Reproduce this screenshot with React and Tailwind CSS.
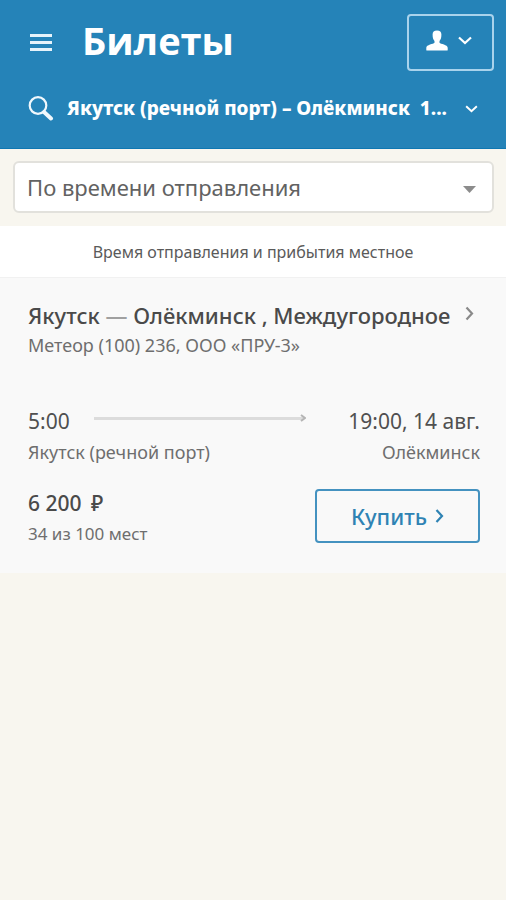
import React from "react"

const MenuIcon = () => (
  <svg width="22" height="20" viewBox="0 0 22 20" fill="#e6f3fb" aria-hidden="true">
    <rect x="0" y="1" width="22" height="3" />
    <rect x="0" y="8" width="22" height="3" />
    <rect x="0" y="15" width="22" height="3" />
  </svg>
)

const SearchIcon = () => (
  <svg width="26" height="26" viewBox="0 0 26 26" fill="none" stroke="#f0f8fd" aria-hidden="true">
    <circle cx="10" cy="10.5" r="8.3" strokeWidth="2.2" />
    <path d="M16 17 L23 23.5" strokeWidth="4" strokeLinecap="round" />
  </svg>
)

const UserIcon = () => (
  <svg width="22" height="22" viewBox="0 0 22 22" fill="#ffffff" aria-hidden="true">
    <path d="M11 0.5 C14 0.5 15.4 1.8 15.4 4.6 C15.4 8 14.8 9.6 13.5 11 V12.8 C14.5 14.2 21.7 14.6 21.7 17.8 V20 Q21.7 20.6 21 20.6 H1 Q0.3 20.6 0.3 20 V17.8 C0.3 14.6 7.5 14.2 8.5 12.8 V11 C7.2 9.6 6.6 8 6.6 4.6 C6.6 1.8 8 0.5 11 0.5 Z" />
  </svg>
)

const ChevronDown = ({ className }) => (
  <svg className={className} viewBox="0 0 14 9" fill="none" stroke="currentColor" strokeWidth="2.2" aria-hidden="true">
    <path d="M1 1.5 L7 7 L13 1.5" />
  </svg>
)

const ChevronRight = ({ className }) => (
  <svg className={className} viewBox="0 0 9 14" fill="none" stroke="currentColor" strokeWidth="2.2" aria-hidden="true">
    <path d="M1.5 1 L7 7 L1.5 13" />
  </svg>
)

const Header = () => (
  <header className="bg-[#2583b8] border-b border-[#0f77b2] pt-[14px] text-white">
    <div className="flex items-start pl-[30px] pr-3">
      <button type="button" aria-label="Меню" className="mt-[19px] shrink-0">
        <MenuIcon />
      </button>
      <h1 className="ml-[30px] flex-1 font-['Open_Sans','Noto_Sans',sans-serif] text-[38px] leading-[52px] font-bold">
        Билеты
      </h1>
      <button
        type="button"
        aria-label="Профиль"
        className="flex h-[57px] w-[87px] items-center justify-center gap-[10px] rounded border-2 border-[#a9d3ec] pr-1 pb-1"
      >
        <UserIcon />
        <ChevronDown className="h-[9px] w-[14px]" />
      </button>
    </div>
    <button type="button" className="flex h-[77px] w-full items-center pr-7 pb-1 pl-7 text-left">
      <SearchIcon />
      <span className="ml-[13px] min-w-0 flex-1 truncate text-[19px] leading-6 font-extrabold whitespace-pre">
        {"Якутск (речной порт) – Олёкминск  1..."}
      </span>
      <ChevronDown className="mt-[2px] h-2 w-[13px] shrink-0" />
    </button>
  </header>
)

const SortSelect = () => (
  <div className="pt-3 pr-3 pb-[13px] pl-[13px]">
    <div className="relative">
      <select
        aria-label="Сортировка"
        className="h-[52px] w-full appearance-none rounded-md border-2 border-[#e2e1dc] bg-white px-3 text-[22px] leading-7 text-[#626262]"
      >
        <option>По времени отправления</option>
      </select>
      <svg
        className="pointer-events-none absolute top-[25px] right-[18px] h-[7px] w-[13px]"
        viewBox="0 0 13 7"
        fill="#8c8c8c"
        aria-hidden="true"
      >
        <path d="M0 0 H13 L6.5 7 Z" />
      </svg>
    </div>
  </div>
)

const TripArrow = () => (
  <div className="flex flex-1 items-center pr-[42px] pl-6 pb-[6px]">
    <div className="h-[3px] flex-1 bg-[#dcdcdc]" />
    <svg className="-ml-1 h-2 w-[6px]" viewBox="0 0 6 8" fill="none" stroke="#b5b5b5" strokeWidth="2" aria-hidden="true">
      <path d="M1 1 L5 4 L1 7" />
    </svg>
  </div>
)

const TripCard = () => (
  <article className="bg-[#f9f9f9] px-[26px] pt-[21px] pb-6 pl-7 text-[#6e6e6e]">
    <a href="#trip" className="flex items-center justify-between text-[22px] leading-8 font-medium text-[#4a4a4a]">
      <h2>
        Якутск <span className="text-[#a0a0a0]">—</span> Олёкминск , Междугородное
      </h2>
      <ChevronRight className="mr-[6px] mb-1 h-[15px] w-[9px] shrink-0 text-[#8a8a8a]" />
    </a>
    <p className="text-[18px] leading-7">Метеор (100) 236, ООО «ПРУ-3»</p>

    <div className="mt-[46px] flex items-center text-[21px] leading-8 text-[#505050]">
      <time>5:00</time>
      <TripArrow />
      <time>19:00, 14 авг.</time>
    </div>
    <div className="flex justify-between text-[18px] leading-[30px]">
      <span>Якутск (речной порт)</span>
      <span>Олёкминск</span>
    </div>

    <div className="mt-5 flex items-start justify-between">
      <div>
        <p className="text-[21px] leading-8 font-medium text-[#4a4a4a]">
          6 200 <span className="ml-1">₽</span>
        </p>
        <p className="text-[17px] leading-[30px]">34 из 100 мест</p>
      </div>
      <button
        type="button"
        className="mt-[2px] flex h-[54px] w-[165px] items-center justify-center gap-2 rounded border-2 border-[#4492c0] text-[22px] font-medium text-[#2f83b4]"
      >
        Купить
        <ChevronRight className="h-[14px] w-[9px]" />
      </button>
    </div>
  </article>
)

export default function App() {
  return (
    <div className="min-h-screen bg-[#f8f6ef] font-['Noto_Sans','Open_Sans',sans-serif]">
      <Header />
      <main>
        <SortSelect />
        <p className="border-b border-[#f1f1f1] bg-white pt-[13px] pb-[11px] text-center text-[16px] leading-[27px] text-[#5a5a5a]">
          Время отправления и прибытия местное
        </p>
        <TripCard />
      </main>
    </div>
  )
}
